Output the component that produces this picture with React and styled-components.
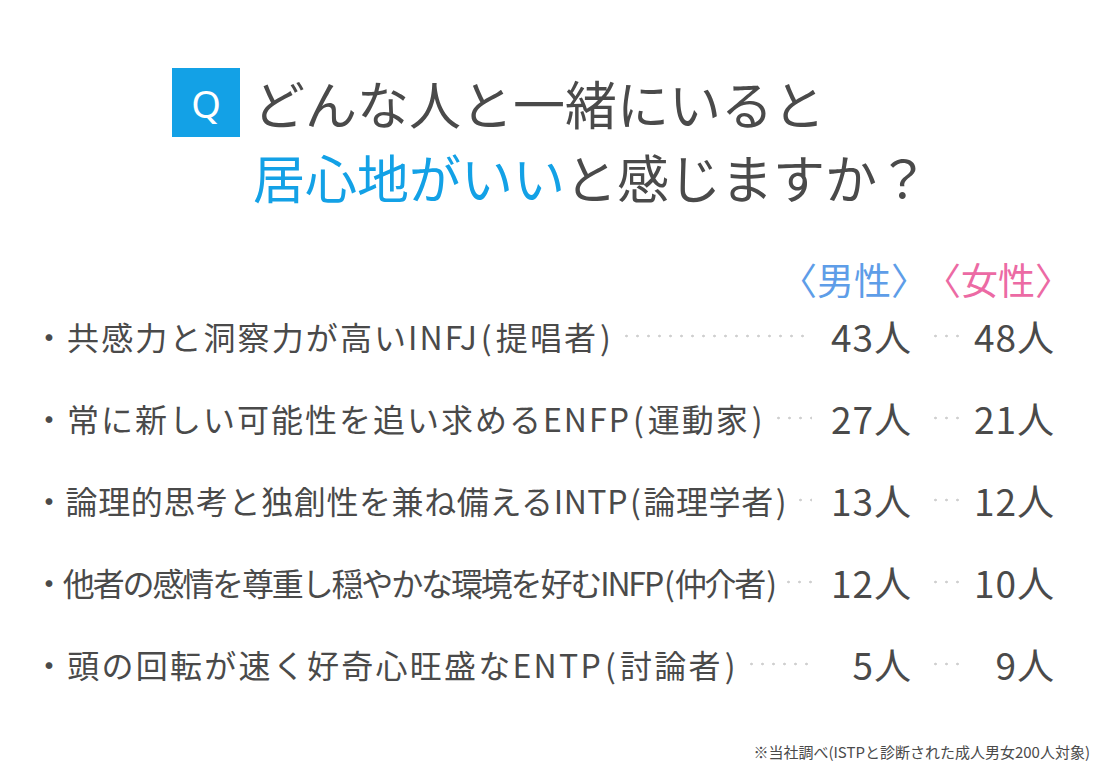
import styled, { createGlobalStyle } from "styled-components";

const GlobalStyle = createGlobalStyle`
  html, body {
    margin: 0;
    padding: 0;
    background: #ffffff;
  }
  body {
    font-family: "Noto Sans CJK JP", "Noto Sans", sans-serif;
    color: #4a4a4a;
  }
`;

const Page = styled.div`
  width: 1100px;
  height: 770px;
  box-sizing: border-box;
  padding-top: 66px;
  display: flex;
  flex-direction: column;
  overflow: hidden;
`;

const Heading = styled.div`
  display: flex;
  align-items: flex-start;
  gap: 13px;
  padding-left: 172px;
`;

const QBadge = styled.div`
  flex: 0 0 auto;
  width: 68px;
  height: 69px;
  margin-top: 2px;
  background: #13a1e6;
  color: #ffffff;
  display: flex;
  align-items: center;
  justify-content: center;
  font-family: "Noto Sans", "Liberation Sans", sans-serif;
  font-size: 38px;
  line-height: 1;
`;

const Title = styled.h1`
  margin: 0;
  font-weight: 400;
  font-size: 52px;
  line-height: 74px;
  color: #4a4a4a;
  white-space: nowrap;
`;

const Accent = styled.span`
  color: #13a1e6;
`;

const ColumnHeads = styled.div`
  display: flex;
  justify-content: flex-end;
  padding-right: 28px;
  margin-top: 44px;
  margin-bottom: -5px;
  font-size: 37px;
  line-height: 42px;
`;

const Gender = styled.span`
  color: ${(p) => (p.$female ? "#ec6aa4" : "#5e9de8")};
  margin-left: ${(p) => (p.$female ? "-4px" : "0")};
`;

const Row = styled.div`
  display: flex;
  align-items: center;
  height: 82px;
  padding-left: 33px;
  padding-right: 45px;
`;

const Label = styled.span`
  flex: 0 0 auto;
  font-size: 32px;
  letter-spacing: ${(p) => p.$track}px;
  white-space: nowrap;
`;

const Paren = styled.span`
  margin: ${(p) => (p.$open ? "0 2px 0 2px" : "0 0 0 2px")};
`;

const Leader = styled.span`
  flex: ${(p) => (p.$width ? `0 0 ${p.$width}px` : "1 1 auto")};
  height: 4px;
  margin: ${(p) => (p.$width ? "0 0 0 18px" : "0 10px 0 8px")};
  background-image: radial-gradient(circle, #cfcfcf 1px, transparent 1.7px);
  background-size: 11px 4px;
  background-repeat: repeat-x;
  background-position: left center;
`;

const Count = styled.span`
  flex: ${(p) => (p.$grow ? "1 1 auto" : "0 0 90px")};
  text-align: right;
  font-size: 37px;
  letter-spacing: 1px;
  white-space: nowrap;
`;

const FemaleCell = styled.span`
  flex: 0 0 143px;
  display: flex;
  align-items: center;
`;

const Note = styled.div`
  margin-top: auto;
  padding: 0 10px 8px 0;
  text-align: right;
  font-size: 15px;
  line-height: 20px;
  color: #4a4a4a;
`;

// track: per-row letter-spacing, the source fits each line to the leader
const rows = [
  { text: "共感力と洞察力が高いINFJ", role: "提唱者", track: 2.1, male: "43人", female: "48人" },
  { text: "常に新しい可能性を追い求めるENFP", role: "運動家", track: 2.0, male: "27人", female: "21人" },
  { text: "論理的思考と独創性を兼ね備えるINTP", role: "論理学者", track: 0.6, male: "13人", female: "12人" },
  { text: "他者の感情を尊重し穏やかな環境を好むINFP", role: "仲介者", track: -2.15, male: "12人", female: "10人" },
  { text: "頭の回転が速く好奇心旺盛なENTP", role: "討論者", track: 2.25, male: "5人", female: "9人" },
];

export default function App() {
  return (
    <>
      <GlobalStyle />
      <Page>
        <Heading>
          <QBadge>Q</QBadge>
          <Title>
            どんな人と一緒にいると
            <br />
            <Accent>居心地がいい</Accent>と感じますか？
          </Title>
        </Heading>

        <ColumnHeads>
          <Gender>〈男性〉</Gender>
          <Gender $female>〈女性〉</Gender>
        </ColumnHeads>

        {rows.map((r) => (
          <Row key={r.text}>
            <Label $track={r.track}>
              ・{r.text}
              <Paren $open>(</Paren>
              {r.role}
              <Paren>)</Paren>
            </Label>
            <Leader />
            <Count>{r.male}</Count>
            <FemaleCell>
              <Leader $width={32} />
              <Count $grow>{r.female}</Count>
            </FemaleCell>
          </Row>
        ))}

        <Note>※当社調べ(ISTPと診断された成人男女200人対象)</Note>
      </Page>
    </>
  );
}
